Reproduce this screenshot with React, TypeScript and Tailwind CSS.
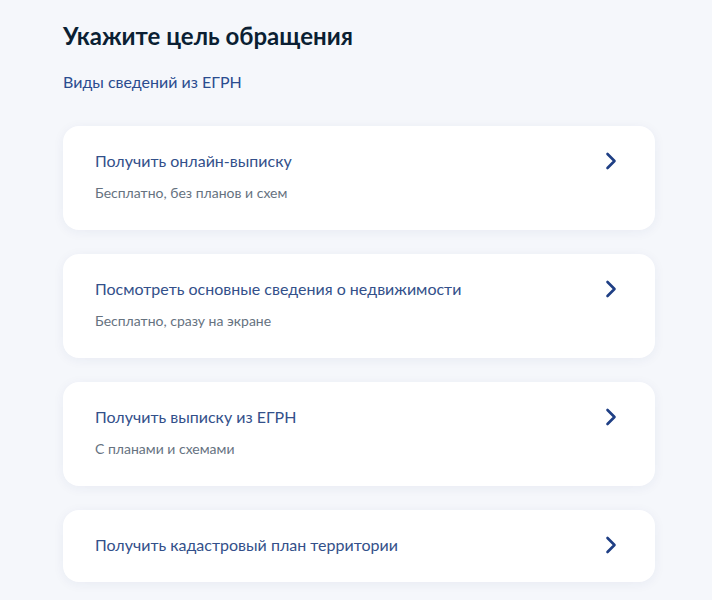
import React from "react";

const items = [
  { title: "Получить онлайн-выписку", sub: "Бесплатно, без планов и схем" },
  { title: "Посмотреть основные сведения о недвижимости", sub: "Бесплатно, сразу на экране" },
  { title: "Получить выписку из ЕГРН", sub: "С планами и схемами" },
  { title: "Получить кадастровый план территории", sub: "" },
];

function Chevron() {
  return (
    <svg width="12" height="18" viewBox="0 0 12 18" fill="none" className="shrink-0">
      <path d="M2.5 2 L9.5 9 L2.5 16" stroke="#1f3f85" strokeWidth="2.6" strokeLinecap="round" strokeLinejoin="round" />
    </svg>
  );
}

export default function App() {
  return (
    <div className="min-h-[600px] w-[712px] bg-[#f5f7fb] font-['Lato','Noto_Sans',sans-serif] px-[63px] pt-[20px] pb-[20px]">
      <h1 className="text-[24px] leading-[32px] font-bold text-[#0b1f33]">Укажите цель обращения</h1>
      <div className="mt-[18px] text-[16px] leading-[24px] text-[#2a4c8f]">Виды сведений из ЕГРН</div>
      <div className="mt-[32px] flex flex-col gap-[24px] w-[592px]">
        {items.map((it) => (
          <div
            key={it.title}
            className={`bg-white rounded-[16px] shadow-[0_2px_12px_rgba(30,50,120,0.06)] pl-[32px] pr-[38px] pt-[23px] flex items-start justify-between ${it.sub ? "h-[104px]" : "h-[72px]"}`}
          >
            <div className="flex flex-col">
              <div className="text-[16px] leading-[24px] text-[#33508a]">{it.title}</div>
              {it.sub && <div className="mt-[10px] text-[14px] leading-[20px] text-[#66727f]">{it.sub}</div>}
            </div>
            <div className="mt-[3px]">
              <Chevron />
            </div>
          </div>
        ))}
      </div>
    </div>
  );
}
